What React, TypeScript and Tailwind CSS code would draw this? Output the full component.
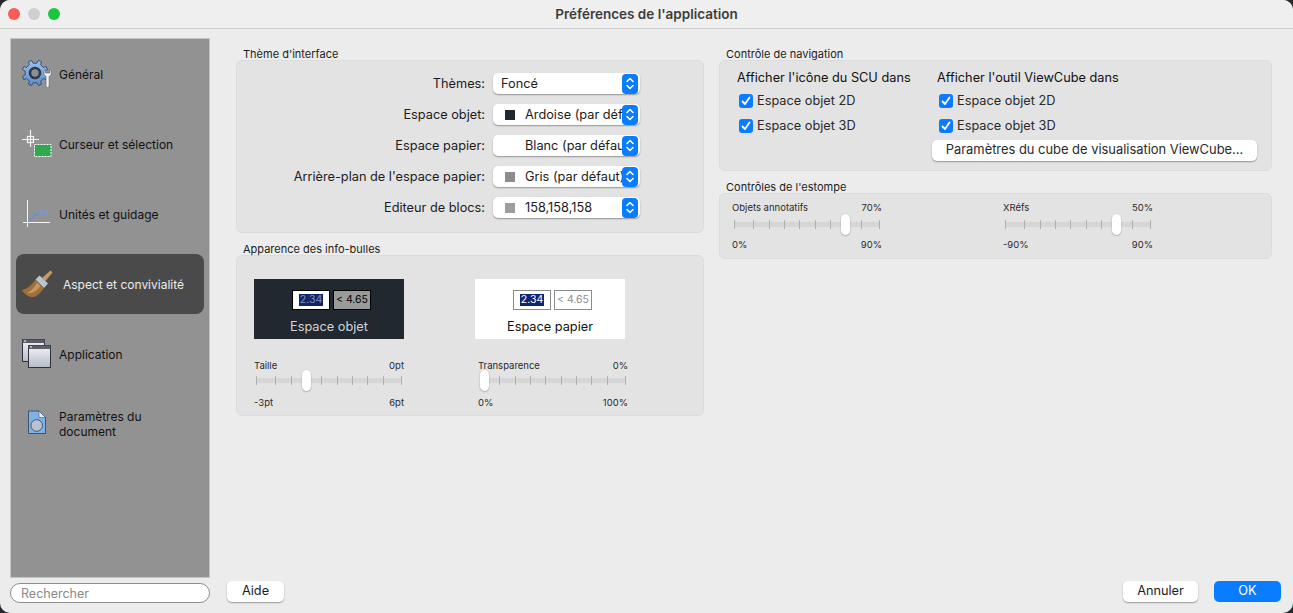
import { ReactNode } from 'react';

const TICKS = [0, 19, 35, 50, 65, 81, 96, 111, 127, 145];

// 8 tooth gear outline
const gearPath = (cx: number, cy: number, outer: number, inner: number) => {
  const pts: string[] = [];
  for (let i = 0; i < 8; i++) {
    const a = (i * Math.PI) / 4 - Math.PI / 8;
    [[-0.2, inner], [-0.13, outer], [0.13, outer], [0.2, inner]].forEach(([d, r]) => {
      pts.push(`${(cx + r * Math.cos(a + d)).toFixed(2)} ${(cy + r * Math.sin(a + d)).toFixed(2)}`);
    });
  }
  return `M${pts.join(' L')} Z`;
};

const GearIcon = () => (
  <svg width="32" height="32" viewBox="0 0 32 32">
    <defs>
      <linearGradient id="gearFill" x1="0" y1="0" x2="0" y2="1">
        <stop offset="0" stopColor="#9cc2f0" />
        <stop offset="1" stopColor="#5a8bcb" />
      </linearGradient>
    </defs>
    <path d={gearPath(14, 15, 13, 10)} fill="url(#gearFill)" stroke="#2f4a6e" strokeWidth="0.9" strokeLinejoin="round" />
    <circle cx="14" cy="15" r="5" fill="#8f8f8f" stroke="#2e3a48" strokeWidth="2.6" />
    <path d="M23 12.5 v4 l2 2 v9.5 a1.6 1.6 0 0 0 3.2 0 v-9.5 l2 -2 v-4 l-1.6 -1 v3.5 h-4 v-3.5 z" fill="#f0f2f5" stroke="#4d5966" strokeWidth="0.6" />
  </svg>
);

const CursorIcon = () => (
  <svg width="32" height="32" viewBox="0 0 32 32">
    <path d="M1 11.5 H18 M9.5 2 V19" stroke="#f4f4f4" strokeWidth="1.2" />
    <rect x="6.5" y="8.5" width="6" height="6" fill="none" stroke="#f4f4f4" strokeWidth="1.2" />
    <rect x="13.5" y="16.5" width="16.5" height="12" fill="#2fa84f" stroke="#ffffff" strokeWidth="1" strokeDasharray="2 1" />
  </svg>
);

const UnitsIcon = () => (
  <svg width="32" height="32" viewBox="0 0 32 32">
    <path d="M6.5 2 V29 M2 24.5 H29" stroke="#f6f6f6" strokeWidth="1" />
    <path d="M8 23 L14.5 16.5 H17" stroke="#5c8fe0" strokeWidth="1.3" fill="none" />
    <text x="15" y="17" fontSize="6.5" fill="#6a9aea" fontFamily="Inter, sans-serif">1.00</text>
  </svg>
);

const BrushIcon = () => (
  <svg width="32" height="32" viewBox="0 0 32 32">
    <path d="M21 10 L29.5 2.5 L31.5 4.5 L24.5 13 Z" fill="#c59a66" />
    <path d="M14.5 11.5 L18.5 7.5 L27 15.5 L23 20 Z" fill="#b9c6d2" />
    <path d="M14.5 11.5 L23 20 C21 23 17 28 12.5 29 C8 29.5 3 26 1 22 C6 21 11 17 14.5 11.5 Z" fill="#a07038" />
    <path d="M16 14.5 C14 19 10 23 6 25 C11 26 16 23 19.5 18 Z" fill="#c49660" />
  </svg>
);

const WindowsIcon = () => (
  <svg width="32" height="32" viewBox="0 0 32 32">
    <defs>
      <linearGradient id="winFill" x1="0" y1="0" x2="0" y2="1">
        <stop offset="0" stopColor="#f2f3f6" />
        <stop offset="1" stopColor="#b6bbc9" />
      </linearGradient>
    </defs>
    <rect x="1.5" y="1.5" width="22" height="22" fill="url(#winFill)" stroke="#2f3238" />
    <rect x="1.5" y="1.5" width="22" height="3.5" fill="#5a5e66" />
    <rect x="7.5" y="7.5" width="22" height="22" fill="url(#winFill)" stroke="#2f3238" />
    <rect x="7.5" y="7.5" width="22" height="3.5" fill="#5a5e66" />
    <rect x="9" y="8.5" width="2" height="1" fill="#ffffff" />
    <rect x="3" y="2.5" width="2" height="1" fill="#ffffff" />
  </svg>
);

const DocIcon = () => (
  <svg width="32" height="32" viewBox="0 0 32 32">
    <path d="M7.5 3 H18 L24.5 9.5 V25.5 H7.5 Z" fill="#7fb0e6" stroke="#2e4058" strokeWidth="0.8" />
    <path d="M18 3 L24.5 9.5 H18 Z" fill="#e8eff7" stroke="#2e4058" strokeWidth="0.5" />
    <circle cx="15.7" cy="17.5" r="5.8" fill="#b9c3cf" stroke="#2e4058" strokeWidth="0.8" />
  </svg>
);

const Item = ({ icon, label, selected }: { icon: ReactNode; label: string; selected?: boolean }) =>
  selected ? (
    <div className="mx-[5px] my-[5px] flex h-[60px] items-center rounded-lg bg-[#4a4a4a] pl-[5px] text-[#ececec]">
      <div className="w-[32px] shrink-0">{icon}</div>
      <span className="mt-[1px] ml-[10px]">{label}</span>
    </div>
  ) : (
    <div className="flex h-[70px] items-center pl-[10px] text-[#111111]">
      <div className="w-[32px] shrink-0">{icon}</div>
      <span className="ml-[6px] w-[122px] leading-[15px]">{label}</span>
    </div>
  );

const Stepper = () => (
  <div className="flex h-[20px] w-[16px] shrink-0 items-center justify-center rounded-[4px] bg-[#0a7cff]">
    <svg width="8" height="13" viewBox="0 0 8 13" fill="none" stroke="#ffffff" strokeWidth="1.5" strokeLinecap="round" strokeLinejoin="round">
      <path d="M1 4.5 L4 1.5 L7 4.5" />
      <path d="M1 8.5 L4 11.5 L7 8.5" />
    </svg>
  </div>
);

const SelectRow = ({ label, value, swatch, blank }: { label: string; value: string; swatch?: string; blank?: boolean }) => (
  <div className="flex h-[31px] items-center justify-end pr-[63px]">
    <span className="mr-[8px] whitespace-nowrap text-[#1c1c1c]">{label}</span>
    <div className="flex h-[21px] w-[147px] items-center overflow-hidden rounded-[5px] bg-white pr-[2px] shadow-[0_1px_1.5px_rgba(0,0,0,0.35)]">
      <div className={`flex min-w-0 flex-1 items-center overflow-hidden whitespace-nowrap text-[#1c1c1c] ${swatch || blank ? 'pl-[12px]' : 'pl-[8px]'}`}>
        {swatch && <span className={`mr-[10px] h-[10px] w-[10px] shrink-0 ${swatch}`} />}
        {blank && <span className="mr-[10px] h-[10px] w-[10px] shrink-0" />}
        <span>{value}</span>
      </div>
      <Stepper />
    </div>
  </div>
);

const Check = ({ label }: { label: string }) => (
  <div className="flex h-[25px] items-center pl-[2px]">
    <div className="flex h-[14px] w-[14px] items-center justify-center rounded-[3px] bg-[#0a7cff]">
      <svg width="10" height="10" viewBox="0 0 10 10" fill="none" stroke="#ffffff" strokeWidth="1.8" strokeLinecap="round" strokeLinejoin="round">
        <path d="M1.5 5.5 L4 8 L8.5 1.5" />
      </svg>
    </div>
    <span className="ml-[4px] text-[#2a2a2a]">{label}</span>
  </div>
);

const Slider = ({ topLeft, topRight, botLeft, botRight, thumb, trackClass, botClass }: {
  topLeft: string; topRight: string; botLeft: string; botRight: string; thumb: number; trackClass: string; botClass: string;
}) => (
  <div className="w-[150px] text-[9.5px] leading-[12px] text-[#2a2a2a]">
    <div className="flex justify-between"><span>{topLeft}</span><span>{topRight}</span></div>
    <div className={`relative mx-[2px] h-[21px] ${trackClass}`}>
      <div className="absolute top-[8px] left-0 h-[5px] w-[146px] bg-[#d6d6d6]" />
      {TICKS.map((t) => (
        <div key={t} className="absolute top-[6px] h-[9px] w-[1px] bg-[#b0b0b0]" style={{ left: t }} />
      ))}
      <div className="absolute top-0 h-[21px] w-[9px] rounded-full bg-white shadow-[0_0.5px_1.5px_rgba(0,0,0,0.4)]" style={{ left: thumb }} />
    </div>
    <div className={`flex justify-between ${botClass}`}><span>{botLeft}</span><span>{botRight}</span></div>
  </div>
);

const Section = ({ title, children, className }: { title: string; children: ReactNode; className: string }) => (
  <div>
    <div className="h-[14px] pl-[7px] text-[11px] leading-[16px] text-[#1c1c1c]">{title}</div>
    <div className={`rounded-[6px] border border-[#dcdcdc] bg-[#e3e3e3] ${className}`}>{children}</div>
  </div>
);

const Preview = ({ dark }: { dark?: boolean }) => (
  <div className={`flex h-[60px] w-[150px] flex-col items-center ${dark ? 'bg-[#212830] text-[#d4d4d4]' : 'bg-white text-[#111111]'}`}>
    <div className="mt-[11px] ml-[5px] flex h-[20px] gap-[3px] text-[10.5px] leading-none">
      <div className={`flex w-[38px] items-center justify-center border-[1.5px] bg-white ${dark ? 'border-black' : 'border-[#8c8c8c]'}`}>
        <span className={`flex h-[12px] w-[24px] items-center justify-center bg-[#0f2570] ${dark ? 'text-[#8a92a8]' : 'text-white'}`}>2.34</span>
      </div>
      <div className={`flex w-[38px] items-center justify-center border-[1.5px] ${dark ? 'border-black bg-[#9a9a9a] text-black' : 'border-[#8c8c8c] bg-white text-[#8c8c8c]'}`}>
        &lt; 4.65
      </div>
    </div>
    <div className="mt-[10px] text-[12.75px] leading-[14px]">{dark ? 'Espace objet' : 'Espace papier'}</div>
  </div>
);

const Button = ({ label, className }: { label: string; className: string }) => (
  <div className={`flex h-[21px] items-center justify-center rounded-[5px] pb-[1px] ${className}`}>{label}</div>
);

export default function App() {
  return (
    <div className="h-[613px] w-[1293px] overflow-hidden bg-[#26282c] text-[12.75px]" style={{ fontFamily: 'Inter, "Liberation Sans", sans-serif' }}>
      <div className="flex h-full flex-col rounded-[10px] bg-[#ececec]">
        <div className="relative flex h-[29px] shrink-0 items-center justify-center rounded-t-[10px] border-b border-[#cfcfcf] bg-[#efefef] text-[13.5px] font-semibold text-[#3c3c3c]">
          <div className="absolute top-[8px] left-[8px] flex gap-[8px]">
            <span className="h-[12px] w-[12px] rounded-full bg-[#fc5b57]" />
            <span className="h-[12px] w-[12px] rounded-full bg-[#cfcfcf]" />
            <span className="h-[12px] w-[12px] rounded-full bg-[#1bc640]" />
          </div>
          Préférences de l'application
        </div>
        <div className="flex min-h-0 flex-1 pt-[9px]">
          <div className="ml-[10px] w-[200px] shrink-0">
            <div className="h-[540px] border border-[#c4c4c4] bg-[#929292] text-[12px]">
              <Item icon={<GearIcon />} label="Général" />
              <Item icon={<CursorIcon />} label="Curseur et sélection" />
              <Item icon={<UnitsIcon />} label="Unités et guidage" />
              <Item icon={<BrushIcon />} label="Aspect et convivialité" selected />
              <Item icon={<WindowsIcon />} label="Application" />
              <Item icon={<DocIcon />} label="Paramètres du document" />
            </div>
            <div className="mt-[5px] flex h-[20px] items-center rounded-full border border-[#8e8e8e] bg-white pt-[2px] pl-[10px] text-[12.5px] text-[#8a8a8a]">
              Rechercher
            </div>
          </div>
          <div className="flex min-w-0 flex-1 flex-col">
            <div className="flex pt-[8px]">
              <div className="ml-[26px] flex w-[468px] shrink-0 flex-col gap-[8px]">
                <Section title="Thème d'interface" className="h-[173px] pt-[7px]">
                  <SelectRow label="Thèmes:" value="Foncé" />
                  <SelectRow label="Espace objet:" value="Ardoise (par défaut)" swatch="bg-[#212830]" />
                  <SelectRow label="Espace papier:" value="Blanc (par défaut)" blank />
                  <SelectRow label="Arrière-plan de l'espace papier:" value="Gris (par défaut)" swatch="bg-[#8c8c8c]" />
                  <SelectRow label="Editeur de blocs:" value="158,158,158" swatch="bg-[#9e9e9e]" />
                </Section>
                <Section title="Apparence des info-bulles" className="h-[161px] pt-[23px] pl-[17px]">
                  <div className="flex gap-[71px]">
                    <Preview dark />
                    <Preview />
                  </div>
                  <div className="mt-[21px] flex gap-[74px]">
                    <Slider topLeft="Taille" topRight="0pt" botLeft="-3pt" botRight="6pt" thumb={46} trackClass="mt-[-2px]" botClass="mt-[6px]" />
                    <Slider topLeft="Transparence" topRight="0%" botLeft="0%" botRight="100%" thumb={0} trackClass="mt-[-2px]" botClass="mt-[6px]" />
                  </div>
                </Section>
              </div>
              <div className="ml-[15px] flex w-[553px] shrink-0 flex-col gap-[8px]">
                <Section title="Contrôle de navigation" className="h-[111px] pt-[10px] pl-[17px]">
                  <div className="flex">
                    <div className="w-[200px]">
                      <div className="mb-[3px] h-[14px] leading-[14px] text-[#111111]">Afficher l'icône du SCU dans</div>
                      <Check label="Espace objet 2D" />
                      <Check label="Espace objet 3D" />
                    </div>
                    <div>
                      <div className="mb-[3px] h-[14px] leading-[14px] text-[#111111]">Afficher l'outil ViewCube dans</div>
                      <Check label="Espace objet 2D" />
                      <Check label="Espace objet 3D" />
                      <Button label="Paramètres du cube de visualisation ViewCube..." className="mt-[2px] ml-[-5px] w-[325px] bg-white text-[12.9px] text-[#2a2a2a] shadow-[0_1px_1.5px_rgba(0,0,0,0.35)]" />
                    </div>
                  </div>
                </Section>
                <Section title="Contrôles de l'estompe" className="h-[66px] pt-[8px] pl-[12px]">
                  <div className="flex gap-[121px]">
                    <Slider topLeft="Objets annotatifs" topRight="70%" botLeft="0%" botRight="90%" thumb={107} trackClass="mt-[0px]" botClass="mt-[4px]" />
                    <Slider topLeft="XRéfs" topRight="50%" botLeft="-90%" botRight="90%" thumb={107} trackClass="mt-[0px]" botClass="mt-[4px]" />
                  </div>
                </Section>
              </div>
            </div>
            <div className="mt-auto mb-[11px] flex items-center pr-[12px] pl-[17px]">
              <Button label="Aide" className="w-[57px] bg-white text-[#1c1c1c] shadow-[0_1px_1.5px_rgba(0,0,0,0.35)]" />
              <Button label="Annuler" className="ml-auto w-[75px] bg-white text-[#1c1c1c] shadow-[0_1px_1.5px_rgba(0,0,0,0.35)]" />
              <Button label="OK" className="ml-[16px] w-[67px] bg-[#0a7cff] text-white" />
            </div>
          </div>
        </div>
      </div>
    </div>
  );
}
